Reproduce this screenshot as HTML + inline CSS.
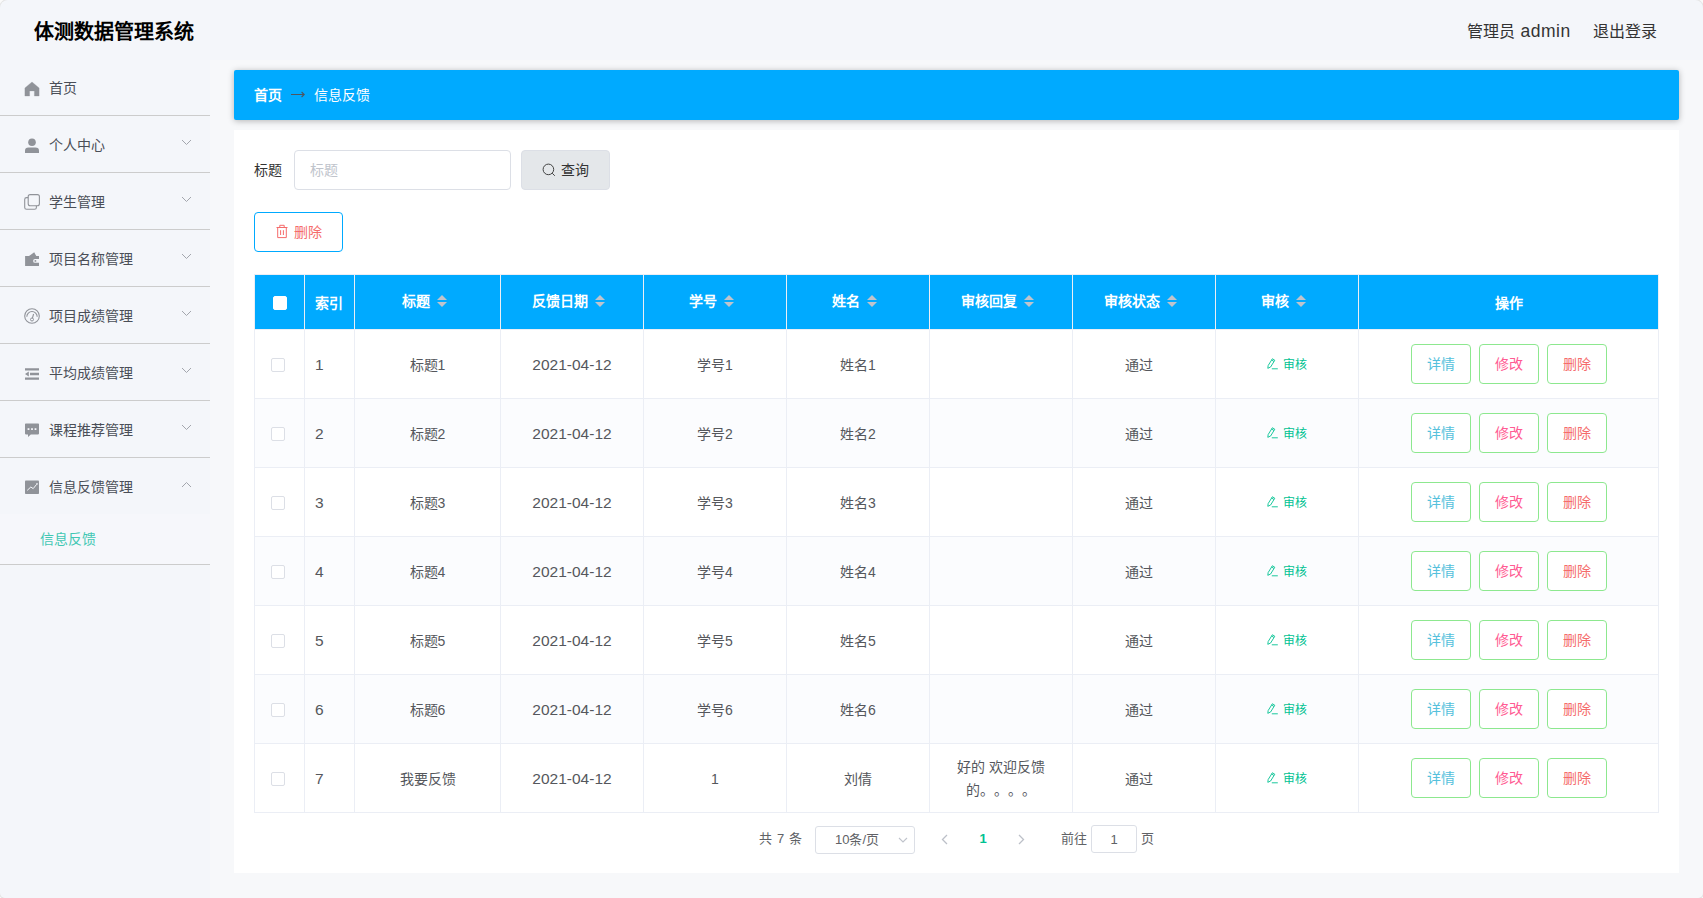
<!DOCTYPE html>
<html lang="zh-CN">
<head>
<meta charset="utf-8">
<title>体测数据管理系统</title>
<style>
*{box-sizing:border-box;margin:0;padding:0}
html,body{width:1703px;height:898px;overflow:hidden}
body{text-spacing-trim:space-all;font-family:"Liberation Sans",sans-serif;font-size:14px;color:#606266;background:#f4f6fa;position:relative}
svg{display:block}
ul{list-style:none}
button,input{font:inherit;outline:none;margin:0}
button{padding:0;text-align:center}
input::placeholder{color:#c0c4cc;opacity:1}
body:after{content:"";position:absolute;left:0;top:0;width:1703px;height:898px;border-radius:8px 8px 5px 5px;box-shadow:0 0 0 1px rgba(0,0,0,.09),0 0 0 12px #fafafa;pointer-events:none}
/* header */
.hd{position:absolute;left:0;top:0;width:1703px;height:60px}
.hd .title{position:absolute;left:34px;top:16px;font-size:20px;line-height:32px;font-weight:bold;color:#000;white-space:nowrap}
.hd .user{position:absolute;left:1467px;top:16px;font-size:16px;line-height:32px;color:#333;white-space:nowrap}
.hd .logout{position:absolute;left:1593px;top:16px;font-size:16px;line-height:32px;color:#333;white-space:nowrap}
/* sidebar */
.side{position:absolute;left:0;top:59px;width:210px;height:839px;background:#f4f6fa}
.mi{position:relative;height:57px;border-bottom:1px solid #ccc;line-height:56px;color:#4a4e57;font-size:14px;white-space:nowrap}
.mi .ic{position:absolute;left:24px;top:20px;width:16px;height:16px}
.mi .tx{position:absolute;left:49px;top:1px}
.mi .ar{position:absolute;left:181px;top:23px;width:11px;height:7px}
.mi.open{height:107px}
.mi .sub{position:absolute;left:0;top:56px;width:210px;height:50px;padding-left:40px;line-height:51px;color:#41c7b3;background:#f6f7fb}
/* main */
.main{position:absolute;left:210px;top:60px;width:1493px;height:838px;background:#f7f8fa}
.bc{position:absolute;left:24px;top:10px;width:1445px;height:50px;background:#00aaff;border-radius:2px;box-shadow:0 1px 6px rgba(0,0,0,.28);color:#fff;line-height:50px;font-size:14px;white-space:nowrap}
.bc b{position:absolute;left:20px;top:0}
.bc svg{position:absolute;left:57px;top:20px}
.bc span{position:absolute;left:80px;top:0}
.panel{position:absolute;left:24px;top:70px;width:1445px;height:743px;background:#fff}

/* filter */
.flabel{position:absolute;left:20px;top:20px;line-height:40px;font-size:14px;color:#333;white-space:nowrap}
.finput{position:absolute;left:60px;top:20px;width:217px;height:40px;border:1px solid #dcdfe6;border-radius:4px;background:#fff;line-height:38px;padding:0 15px;color:#606266;font-size:14px}
.fbtn{position:absolute;left:287px;top:20px;width:89px;height:40px;border-radius:4px;border:1px solid #dcdfe6;background:#e4e7ea;color:#333;line-height:38px;font-size:14px;white-space:nowrap}
.fbtn svg{position:absolute;left:20px;top:12px}
.fbtn span{position:absolute;left:39px;top:0}
.dbtn{position:absolute;left:20px;top:82px;width:89px;height:40px;border:1px solid #00aaff;border-radius:4px;background:#fff;color:#f56c6c;line-height:38px;font-size:14px;white-space:nowrap}
.dbtn svg{position:absolute;left:20px;top:11px}
.dbtn span{position:absolute;left:39px;top:0}
/* table */
table{position:absolute;left:20px;top:144px;width:1405px;border-collapse:separate;border-spacing:0;table-layout:fixed;border-left:1px solid #ebeef5;border-top:1px solid #ebeef5;font-size:14px;color:#55575c}
th,td{border-right:1px solid #ebeef5;border-bottom:1px solid #ebeef5;text-align:center;vertical-align:middle;padding:0;overflow:hidden;white-space:nowrap}
th{height:55px;background:#00aaff;color:#fff;font-weight:bold;font-size:14px}
td{height:69px;line-height:23px;padding-top:2px}
td.op,td.num,td.c0{padding-top:0}
tr.s td{background:#fbfcfe}
th.l,td.l{text-align:left;padding-left:10px}
.num{font-size:15.5px}
td.st{padding-right:10px}
.ck{display:inline-block;width:14px;height:14px;border:1px solid #dcdfe6;border-radius:2px;background:#fff;vertical-align:middle;position:relative;left:-2px}
th .ck{border-color:#fff;left:0}
.sc{display:inline-block;width:24px;height:14px;vertical-align:middle;position:relative;top:0}
.sc:before,.sc:after{content:"";position:absolute;left:7px;border:5px solid transparent}
.sc:before{border-bottom-color:#c0c4cc;top:-5px}
.sc:after{border-top-color:#c0c4cc;top:7px}
.ht{display:inline-block;vertical-align:middle;position:relative;top:0}
.ht.so{top:-2px}
.sh{color:#00c292;font-size:12px;display:inline-block;position:relative}
.sh svg{display:inline-block;vertical-align:middle;margin-right:5px;position:relative;top:-2px}
.ob{display:inline-block;width:60px;height:40px;border:1px solid #8de88f;border-radius:4px;background:#fff;line-height:38px;font-size:14px;margin:0 4px;vertical-align:middle}
.ob.a{color:#55c1dc}.ob.b{color:#ff5c93}.ob.c{color:#f56c6c}
/* pagination */
.pg{position:absolute;left:0;top:682px;width:1445px;height:54px;font-size:13px;color:#606266;white-space:nowrap}
.pg>*{position:absolute}
.pg .tot{left:525px;top:13px;line-height:28px;word-spacing:1.5px}
.pg .sel{left:581px;top:14px;width:100px;height:28px;border:1px solid #dcdfe6;border-radius:3px;background:#fff;line-height:26px}
.pg .sel span{position:absolute;left:19px;top:0}
.pg .sel svg{position:absolute;left:82px;top:10px}
.pg .pv{left:707px;top:22px}
.pg .nx{left:784px;top:22px}
.pg .cur{left:735px;top:13px;width:28px;text-align:center;line-height:28px;color:#00c292;font-weight:bold}
.pg .go{left:827px;top:13px;line-height:28px}
.pg .gi{left:857px;top:13px;width:46px;height:28px;border:1px solid #dcdfe6;border-radius:3px;background:#fff;line-height:26px;padding:0;color:#606266;font-size:13px;text-align:center}
.pg .ye{left:907px;top:13px;line-height:28px}
</style>
</head>
<body>
<header class="hd">
  <div class="title">体测数据管理系统</div>
  <div class="user">管理员 <span style="font-size:17.5px;line-height:1;letter-spacing:.5px;position:relative;left:1px">admin</span></div>
  <div class="logout">退出登录</div>
</header>
<ul class="side">
  <li class="mi"><svg class="ic" style="top:22px" width="16" height="16" viewBox="0 0 16 16"><path d="M8 1 L15.1 6.9 V15 H10.4 V9.9 H5.6 V15 H.9 V6.9 Z" fill="#909399" stroke="#909399" stroke-width=".3" stroke-linejoin="round"/></svg><span class="tx">首页</span></li>
  <li class="mi"><svg class="ic" style="top:22px" width="16" height="16" viewBox="0 0 16 16"><circle cx="8" cy="4.2" r="3.8" fill="#909399"/><path d="M1 15 V12.6 Q1 9.4 4.6 9.4 H11.4 Q15 9.4 15 12.6 V15 Z" fill="#909399"/></svg><span class="tx">个人中心</span><svg class="ar" width="11" height="7" viewBox="0 0 11 7"><path d="M1 1 L5.5 5.5 L10 1" fill="none" stroke="#a3a6ad" stroke-width="1"/></svg></li>
  <li class="mi"><svg class="ic" style="top:21px" width="16" height="16" viewBox="0 0 16 16"><rect x="4.2" y=".6" width="11.2" height="11.2" rx="2" fill="none" stroke="#909399" stroke-width="1.1"/><path d="M4.2 3.6 H2.6 Q.7 3.6 .7 5.5 V13.4 Q.7 15.3 2.6 15.3 H10.5 Q12.4 15.3 12.4 13.4 V11.8" fill="none" stroke="#909399" stroke-width="1.1"/></svg><span class="tx">学生管理</span><svg class="ar" width="11" height="7" viewBox="0 0 11 7"><path d="M1 1 L5.5 5.5 L10 1" fill="none" stroke="#a3a6ad" stroke-width="1"/></svg></li>
  <li class="mi"><svg class="ic" style="top:22px" width="16" height="16" viewBox="0 0 16 16"><path d="M1.1 4.1 H5 L10.2 .3 L12.3 4.1 H15 V13.9 H1.1 Z" fill="#909399"/><path d="M15 7 H11 Q9.1 7 9.1 8.9 Q9.1 10.8 11 10.8 H15 Z" fill="#f4f6fa"/><circle cx="11.4" cy="8.9" r=".95" fill="#909399"/></svg><span class="tx">项目名称管理</span><svg class="ar" width="11" height="7" viewBox="0 0 11 7"><path d="M1 1 L5.5 5.5 L10 1" fill="none" stroke="#a3a6ad" stroke-width="1"/></svg></li>
  <li class="mi"><svg class="ic" style="top:21px" width="16" height="16" viewBox="0 0 16 16"><circle cx="8" cy="8" r="7.3" fill="none" stroke="#909399" stroke-width="1.1"/><path d="M2.8 8.7 A5.2 5.2 0 0 1 13.2 8.7" fill="none" stroke="#909399" stroke-width="1.1"/><path d="M8.4 10.2 L9.6 6" stroke="#909399" stroke-width="1.1"/><circle cx="8" cy="11.5" r="1.5" fill="none" stroke="#909399" stroke-width="1"/></svg><span class="tx">项目成绩管理</span><svg class="ar" width="11" height="7" viewBox="0 0 11 7"><path d="M1 1 L5.5 5.5 L10 1" fill="none" stroke="#a3a6ad" stroke-width="1"/></svg></li>
  <li class="mi"><svg class="ic" style="top:22px" width="16" height="16" viewBox="0 0 16 16"><path d="M1 2.2 H15 V4.6 H1 Z M6 6.8 H15 V9.2 H6 Z M1 11.4 H15 V13.8 H1 Z M4.8 5.6 V10.4 L1 8 Z" fill="#909399"/></svg><span class="tx">平均成绩管理</span><svg class="ar" width="11" height="7" viewBox="0 0 11 7"><path d="M1 1 L5.5 5.5 L10 1" fill="none" stroke="#a3a6ad" stroke-width="1"/></svg></li>
  <li class="mi"><svg class="ic" style="top:21px" width="16" height="16" viewBox="0 0 16 16"><path d="M1.8 1.4 H14.2 Q15 1.4 15 2.2 V11.6 Q15 12.4 14.2 12.4 H6.8 L4 15 V12.4 H1.8 Q1 12.4 1 11.6 V2.2 Q1 1.4 1.8 1.4 Z" fill="#909399"/><rect x="3.6" y="6.2" width="1.8" height="1.8" fill="#f4f6fa"/><rect x="7.1" y="6.2" width="1.8" height="1.8" fill="#f4f6fa"/><rect x="10.6" y="6.2" width="1.8" height="1.8" fill="#f4f6fa"/></svg><span class="tx">课程推荐管理</span><svg class="ar" width="11" height="7" viewBox="0 0 11 7"><path d="M1 1 L5.5 5.5 L10 1" fill="none" stroke="#a3a6ad" stroke-width="1"/></svg></li>
  <li class="mi open"><svg class="ic" style="top:21px" width="16" height="16" viewBox="0 0 16 16"><rect x="1" y="1.4" width="14" height="13.6" rx=".8" fill="#909399"/><path d="M3.2 11.4 L6.8 8 L9.2 9.6 L12.6 5.4" fill="none" stroke="#f4f6fa" stroke-width="1"/><circle cx="13" cy="4.9" r=".8" fill="#f4f6fa"/></svg><span class="tx">信息反馈管理</span><svg class="ar" width="11" height="7" viewBox="0 0 11 7"><path d="M1 6 L5.5 1.5 L10 6" fill="none" stroke="#a3a6ad" stroke-width="1"/></svg><span class="sub">信息反馈</span></li>
</ul>
<main class="main">
  <nav class="bc"><b>首页</b><svg width="14" height="9" viewBox="0 0 14 9"><path d="M0 4.5 H13 M10.6 2 L13.2 4.5 L10.6 7" fill="none" stroke="#4f5660" stroke-width="1.1"/></svg><span>信息反馈</span></nav>
  <div class="panel">
    <label class="flabel">标题</label>
    <input class="finput" type="text" placeholder="标题">
    <button class="fbtn"><svg width="14" height="14" viewBox="0 0 14 14"><circle cx="6.4" cy="6.4" r="5.3" fill="none" stroke="#3a3a3a" stroke-width=".95"/><path d="M10.2 10.2 L12.8 12.8" stroke="#3a3a3a" stroke-width=".95"/></svg><span>查询</span></button>
    <button class="dbtn"><svg width="14" height="15" viewBox="0 0 14 15"><path d="M1.5 3.5 H12.5 M4.8 3.5 V1.3 H9.2 V3.5 M2.7 3.5 V13.6 H11.3 V3.5 M5.6 6.2 V11 M8.4 6.2 V11" fill="none" stroke="#f56c6c" stroke-width="1"/></svg><span>删除</span></button>
    <table>
    <colgroup><col style="width:50px"><col style="width:50px"><col style="width:146px"><col style="width:143px"><col style="width:143px"><col style="width:143px"><col style="width:143px"><col style="width:143px"><col style="width:143px"><col style="width:300px"></colgroup>
    <tr><th><span class="ck"></span></th><th class="l"><span class="ht">索引</span></th><th><span class="ht so">标题</span><span class="sc"></span></th><th><span class="ht so">反馈日期</span><span class="sc"></span></th><th><span class="ht so">学号</span><span class="sc"></span></th><th><span class="ht so">姓名</span><span class="sc"></span></th><th><span class="ht so">审核回复</span><span class="sc"></span></th><th><span class="ht so">审核状态</span><span class="sc"></span></th><th><span class="ht so">审核</span><span class="sc"></span></th><th><span class="ht">操作</span></th></tr>
    <tr><td class="c0"><span class="ck"></span></td><td class="l num">1</td><td>标题1</td><td class="num">2021-04-12</td><td>学号1</td><td>姓名1</td><td></td><td class="st">通过</td><td><span class="sh"><svg width="11" height="12" viewBox="0 0 11 12"><path d="M5.4 .75 L7.8 2.25 L3.56 9.05 L.8 10.3 L1.16 7.55 Z M4.6 2 L7 3.5 M4.8 10.8 H10.8" fill="none" stroke="#00c292" stroke-width=".9"/></svg>审核</span></td><td class="op"><button class="ob a">详情</button><button class="ob b">修改</button><button class="ob c">删除</button></td></tr>
    <tr class="s"><td class="c0"><span class="ck"></span></td><td class="l num">2</td><td>标题2</td><td class="num">2021-04-12</td><td>学号2</td><td>姓名2</td><td></td><td class="st">通过</td><td><span class="sh"><svg width="11" height="12" viewBox="0 0 11 12"><path d="M5.4 .75 L7.8 2.25 L3.56 9.05 L.8 10.3 L1.16 7.55 Z M4.6 2 L7 3.5 M4.8 10.8 H10.8" fill="none" stroke="#00c292" stroke-width=".9"/></svg>审核</span></td><td class="op"><button class="ob a">详情</button><button class="ob b">修改</button><button class="ob c">删除</button></td></tr>
    <tr><td class="c0"><span class="ck"></span></td><td class="l num">3</td><td>标题3</td><td class="num">2021-04-12</td><td>学号3</td><td>姓名3</td><td></td><td class="st">通过</td><td><span class="sh"><svg width="11" height="12" viewBox="0 0 11 12"><path d="M5.4 .75 L7.8 2.25 L3.56 9.05 L.8 10.3 L1.16 7.55 Z M4.6 2 L7 3.5 M4.8 10.8 H10.8" fill="none" stroke="#00c292" stroke-width=".9"/></svg>审核</span></td><td class="op"><button class="ob a">详情</button><button class="ob b">修改</button><button class="ob c">删除</button></td></tr>
    <tr class="s"><td class="c0"><span class="ck"></span></td><td class="l num">4</td><td>标题4</td><td class="num">2021-04-12</td><td>学号4</td><td>姓名4</td><td></td><td class="st">通过</td><td><span class="sh"><svg width="11" height="12" viewBox="0 0 11 12"><path d="M5.4 .75 L7.8 2.25 L3.56 9.05 L.8 10.3 L1.16 7.55 Z M4.6 2 L7 3.5 M4.8 10.8 H10.8" fill="none" stroke="#00c292" stroke-width=".9"/></svg>审核</span></td><td class="op"><button class="ob a">详情</button><button class="ob b">修改</button><button class="ob c">删除</button></td></tr>
    <tr><td class="c0"><span class="ck"></span></td><td class="l num">5</td><td>标题5</td><td class="num">2021-04-12</td><td>学号5</td><td>姓名5</td><td></td><td class="st">通过</td><td><span class="sh"><svg width="11" height="12" viewBox="0 0 11 12"><path d="M5.4 .75 L7.8 2.25 L3.56 9.05 L.8 10.3 L1.16 7.55 Z M4.6 2 L7 3.5 M4.8 10.8 H10.8" fill="none" stroke="#00c292" stroke-width=".9"/></svg>审核</span></td><td class="op"><button class="ob a">详情</button><button class="ob b">修改</button><button class="ob c">删除</button></td></tr>
    <tr class="s"><td class="c0"><span class="ck"></span></td><td class="l num">6</td><td>标题6</td><td class="num">2021-04-12</td><td>学号6</td><td>姓名6</td><td></td><td class="st">通过</td><td><span class="sh"><svg width="11" height="12" viewBox="0 0 11 12"><path d="M5.4 .75 L7.8 2.25 L3.56 9.05 L.8 10.3 L1.16 7.55 Z M4.6 2 L7 3.5 M4.8 10.8 H10.8" fill="none" stroke="#00c292" stroke-width=".9"/></svg>审核</span></td><td class="op"><button class="ob a">详情</button><button class="ob b">修改</button><button class="ob c">删除</button></td></tr>
    <tr><td class="c0"><span class="ck"></span></td><td class="l num">7</td><td>我要反馈</td><td class="num">2021-04-12</td><td>1</td><td>刘倩</td><td>好的 欢迎反馈<br>的。。。。</td><td class="st">通过</td><td><span class="sh"><svg width="11" height="12" viewBox="0 0 11 12"><path d="M5.4 .75 L7.8 2.25 L3.56 9.05 L.8 10.3 L1.16 7.55 Z M4.6 2 L7 3.5 M4.8 10.8 H10.8" fill="none" stroke="#00c292" stroke-width=".9"/></svg>审核</span></td><td class="op"><button class="ob a">详情</button><button class="ob b">修改</button><button class="ob c">删除</button></td></tr>
    </table>
    <div class="pg"><span class="tot">共 7 条</span><div class="sel"><span>10条/页</span><svg width="10" height="6" viewBox="0 0 10 6"><path d="M1 1 L5 5 L9 1" fill="none" stroke="#c0c4cc" stroke-width="1.1"/></svg></div><svg class="pv" width="7" height="11" viewBox="0 0 7 11"><path d="M6 1 L1.5 5.5 L6 10" fill="none" stroke="#bcc0c8" stroke-width="1.3"/></svg><span class="cur">1</span><svg class="nx" width="7" height="11" viewBox="0 0 7 11"><path d="M1 1 L5.5 5.5 L1 10" fill="none" stroke="#bcc0c8" stroke-width="1.3"/></svg><span class="go">前往</span><input class="gi" type="text" value="1"><span class="ye">页</span></div>
  </div>
</main>
</body>
</html>
